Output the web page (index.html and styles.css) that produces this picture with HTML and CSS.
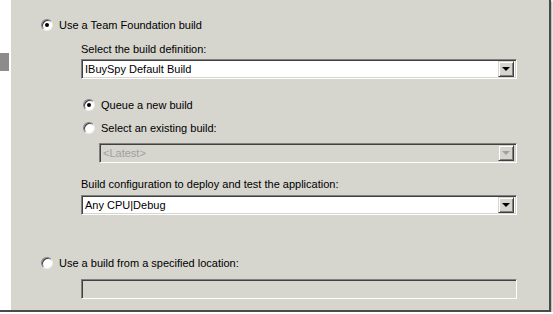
FILE: index.html
```html
<!DOCTYPE html>
<html lang="en">
<head>
    <meta charset="UTF-8">
    <title>Build options</title>
    <link rel="stylesheet" href="styles.css">
</head>
<body>
    <div class="frame">
        <div class="gutter"><div class="marker"></div></div>
        <div class="panel">
            <div class="option first">
                <span class="radio checked"></span>
                <span>Use a Team Foundation build</span>
            </div>
            <div class="group">
                <div class="caption">Select the build definition:</div>
                <div class="combo">
                    <span class="value">IBuySpy Default Build</span>
                    <span class="drop"><span class="arrow"></span></span>
                </div>
                <div class="option sub queue">
                    <span class="radio checked"></span>
                    <span>Queue a new build</span>
                </div>
                <div class="option sub existing">
                    <span class="radio"></span>
                    <span>Select an existing build:</span>
                </div>
                <div class="combo disabled latest">
                    <span class="value">&lt;Latest&gt;</span>
                    <span class="drop"><span class="arrow"></span></span>
                </div>
                <div class="caption config">Build configuration to deploy and test the application:</div>
                <div class="combo config-box">
                    <span class="value">Any CPU|Debug</span>
                    <span class="drop"><span class="arrow"></span></span>
                </div>
            </div>
            <div class="option location">
                <span class="radio"></span>
                <span>Use a build from a specified location:</span>
            </div>
            <div class="group">
                <div class="textbox"></div>
            </div>
        </div>
    </div>
</body>
</html>
```

FILE: styles.css
```css
body {
    margin: 0;
    background-color: #fff;
    font-family: Tahoma, "Liberation Sans", Arial, sans-serif;
    font-size: 11px;
    color: #000;
}
.frame {
    display: flex;
    width: 549px;
    height: 310px;
    border-right: 2px solid #4a4a4a;
    border-bottom: 2px solid #4a4a4a;
    box-shadow: 1px 1px 2px rgba(0, 0, 0, 0.35);
}
.gutter {
    width: 11px;
    background-color: #fff;
}
.marker {
    width: 9px;
    height: 18px;
    margin-top: 53px;
    background-color: #8c8c8c;
}
.panel {
    flex: 1;
    background-color: #d6d5ce;
    padding-left: 30px;
    padding-top: 18px;
}
.option {
    display: flex;
    align-items: center;
    height: 14px;
    line-height: 14px;
}
.option .radio {
    margin-right: 6px;
}
.radio {
    position: relative;
    box-sizing: border-box;
    width: 12px;
    height: 12px;
    border-radius: 50%;
    background-color: #fff;
    border: 1px solid;
    border-color: #808080 #ececec #ececec #808080;
    box-shadow: inset 1px 1px 0 #404040;
}
.radio.checked::after {
    content: "";
    position: absolute;
    left: 3px;
    top: 3px;
    width: 4px;
    height: 4px;
    border-radius: 50%;
    background-color: #000;
}
.group {
    margin-left: 40px;
    width: 436px;
}
.caption {
    height: 14px;
    line-height: 14px;
    margin-top: 10px;
}
.combo {
    display: flex;
    align-items: center;
    box-sizing: border-box;
    height: 20px;
    margin-top: 3px;
    background-color: #fff;
    border: 1px solid;
    border-color: #808080 #fff #fff #808080;
    box-shadow: inset 1px 1px 0 #404040, inset -1px -1px 0 #d6d5ce;
    padding: 0 2px 0 3px;
}
.combo .value {
    flex: 1;
    line-height: 14px;
}
.drop {
    display: flex;
    align-items: center;
    justify-content: center;
    box-sizing: border-box;
    width: 16px;
    height: 16px;
    background-color: #d6d5ce;
    border: 1px solid;
    border-color: #d6d5ce #404040 #404040 #d6d5ce;
    box-shadow: inset 1px 1px 0 #fff, inset -1px -1px 0 #808080;
}
.arrow {
    width: 0;
    height: 0;
    border-left: 4px solid transparent;
    border-right: 4px solid transparent;
    border-top: 4px solid #000;
}
.combo.disabled {
    background-color: #d6d5ce;
    color: #a0a0a0;
}
.combo.disabled .arrow {
    border-top-color: #a0a0a0;
}
.option.sub {
    margin-left: 2px;
}
.queue {
    margin-top: 19px;
}
.existing {
    margin-top: 9px;
}
.latest {
    margin-left: 18px;
    margin-top: 8px;
}
.caption.config {
    margin-top: 14px;
}
.combo.config-box {
    margin-top: 4px;
}
.location {
    margin-top: 41px;
}
.textbox {
    box-sizing: border-box;
    height: 20px;
    margin-top: 9px;
    border: 1px solid;
    border-color: #808080 #fff #fff #808080;
    box-shadow: inset 1px 1px 0 #404040;
}
```
